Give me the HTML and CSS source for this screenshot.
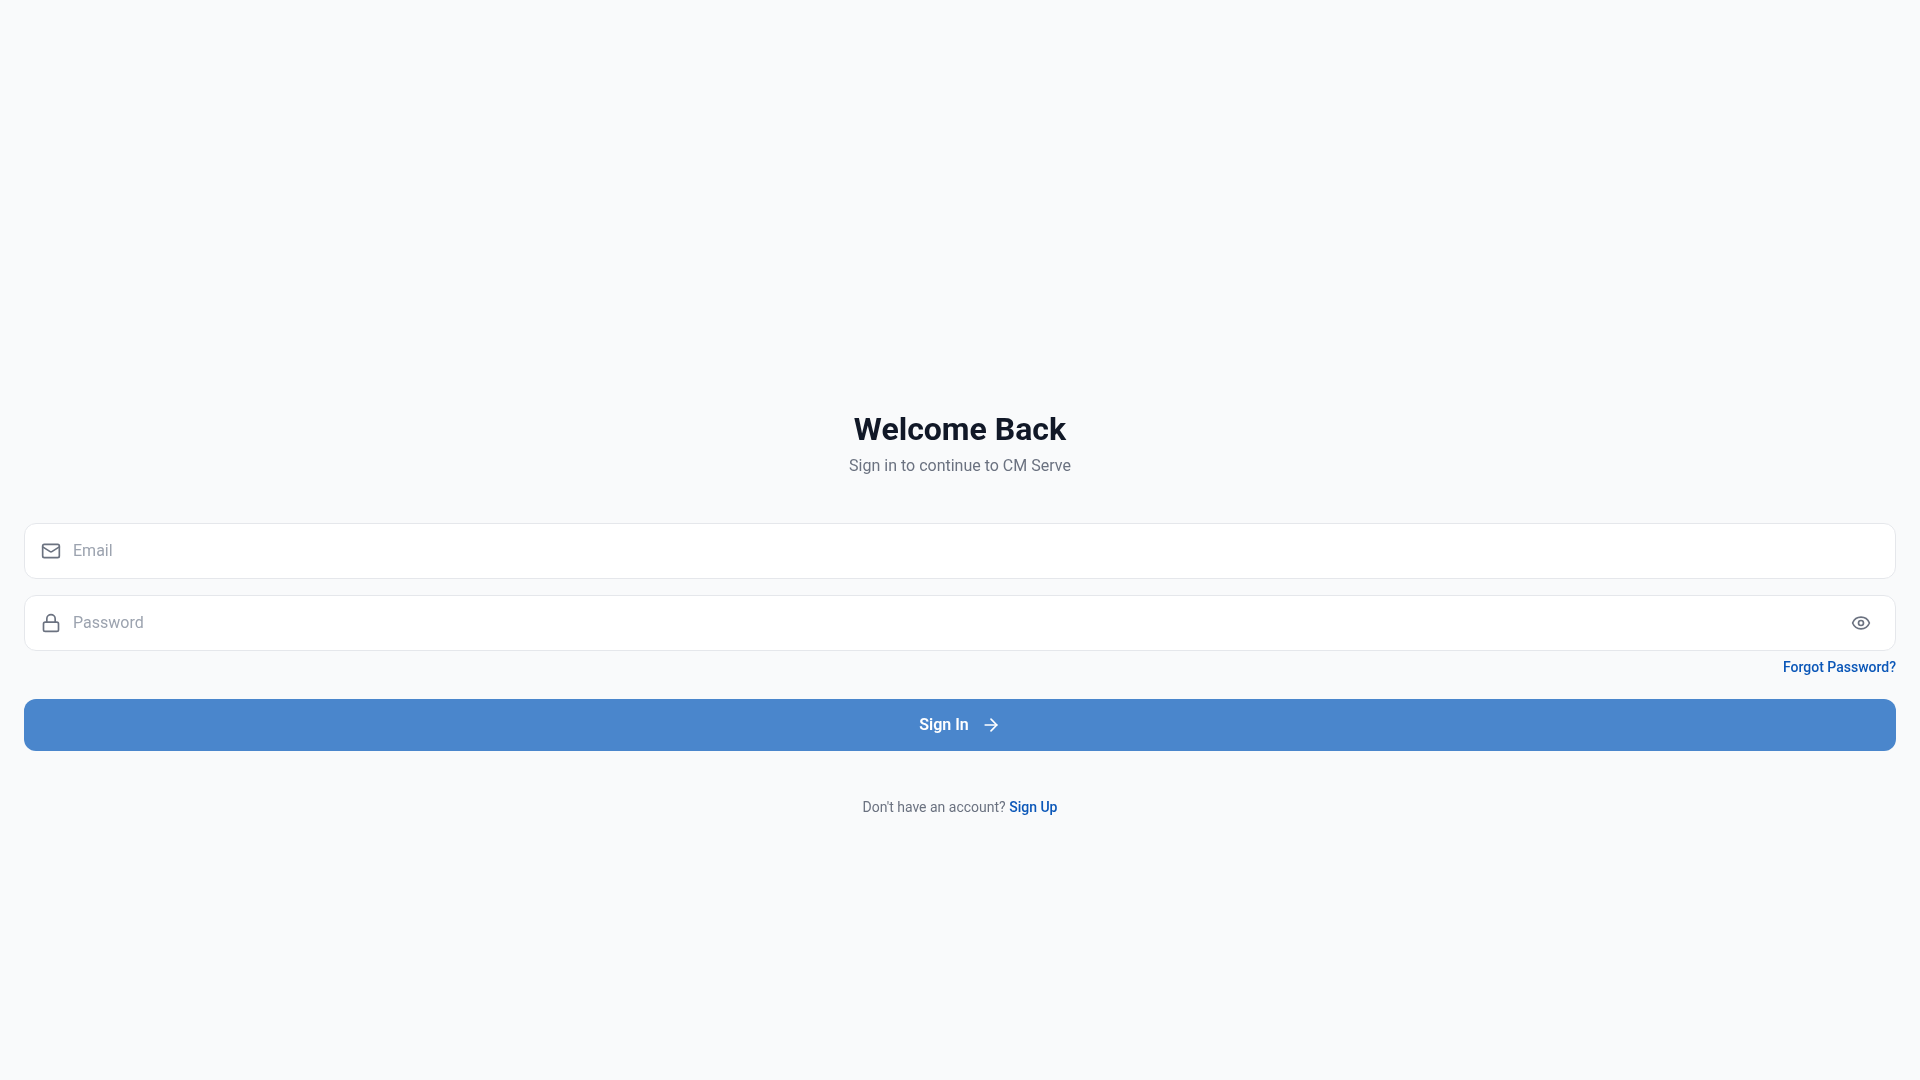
FILE: index.html
```html
<!DOCTYPE html>
<html>
<head>
    <title>Sign In</title>
    <link rel="stylesheet" href="styles.css">
</head>
<body>
    <div class="login-page">
        <div class="login-header">
            <h1>Welcome Back</h1>
            <p>Sign in to continue to CM Serve</p>
        </div>

        <div class="field">
            <svg class="icon" viewBox="0 0 24 24"><rect x="2" y="4" width="20" height="16" rx="2"/><path d="M22 7l-8.97 5.7a1.94 1.94 0 0 1-2.06 0L2 7"/></svg>
            <span class="placeholder">Email</span>
        </div>

        <div class="field field-password">
            <svg class="icon" viewBox="0 0 24 24"><rect x="3" y="11" width="18" height="11" rx="2"/><path d="M7 11V7a5 5 0 0 1 10 0v4"/></svg>
            <span class="placeholder">Password</span>
            <svg class="icon icon-eye" viewBox="0 0 24 24"><path d="M2.06 12.35a1 1 0 0 1 0-.7 10.75 10.75 0 0 1 19.88 0 1 1 0 0 1 0 .7 10.75 10.75 0 0 1-19.88 0"/><circle cx="12" cy="12" r="3"/></svg>
        </div>

        <div class="forgot"><a href="#">Forgot Password?</a></div>

        <button class="submit" type="button">
            <span class="submit-label">Sign In</span>
            <svg class="icon-arrow" viewBox="0 0 24 24"><path d="M5 12h14"/><path d="M12 5l7 7-7 7"/></svg>
        </button>

        <p class="signup">Don't have an account? <a href="#">Sign Up</a></p>
    </div>
</body>
</html>
```

FILE: styles.css
```css
body {
    background-color: #f9fafb;
    margin: 0;
    min-height: 100vh;
    font-family: Roboto, "Liberation Sans", sans-serif;
}

.login-page {
    display: flex;
    flex-direction: column;
    padding: 409px 24px 0 24px;
    will-change: transform;
}

.login-header {
    text-align: center;
    margin-bottom: 45px;
}

.login-header h1 {
    margin: 0 0 5px 0;
    font-size: 32px;
    line-height: 40px;
    font-weight: 700;
    color: #111827;
}

.login-header p {
    margin: 0;
    font-size: 16px;
    line-height: 24px;
    color: #6b7280;
}

.field {
    display: flex;
    align-items: center;
    box-sizing: border-box;
    height: 56px;
    margin-bottom: 16px;
    padding: 0 16px;
    background-color: white;
    border: 1px solid #e5e7eb;
    border-radius: 12px;
}

.field-password {
    margin-bottom: 6px;
}

.icon {
    width: 20px;
    height: 20px;
    margin-right: 12px;
    flex-shrink: 0;
    fill: none;
    stroke: #6b7280;
    stroke-width: 2;
    stroke-linecap: round;
    stroke-linejoin: round;
}

.icon-eye {
    margin: 0 8px 0 auto;
}

.placeholder {
    padding-bottom: 2px;
    font-size: 16px;
    color: #9ca3af;
}

.forgot {
    text-align: right;
    margin-bottom: 22px;
    font-size: 14px;
    line-height: 20px;
}

a {
    color: #0b57b8;
    font-weight: 500;
    text-decoration: none;
}

.submit {
    display: flex;
    align-items: center;
    justify-content: center;
    gap: 12px;
    height: 52px;
    padding: 0;
    border: none;
    border-radius: 12px;
    background-color: #4a86cc;
    color: white;
    font-family: inherit;
    font-size: 16px;
    font-weight: 600;
}

.submit-label {
    padding-bottom: 2px;
}

.icon-arrow {
    width: 20px;
    height: 20px;
    fill: none;
    stroke: white;
    stroke-width: 2;
    stroke-linecap: round;
    stroke-linejoin: round;
}

.signup {
    margin: 46px 0 0 0;
    text-align: center;
    font-size: 14px;
    line-height: 20px;
    color: #6b7280;
}
```
